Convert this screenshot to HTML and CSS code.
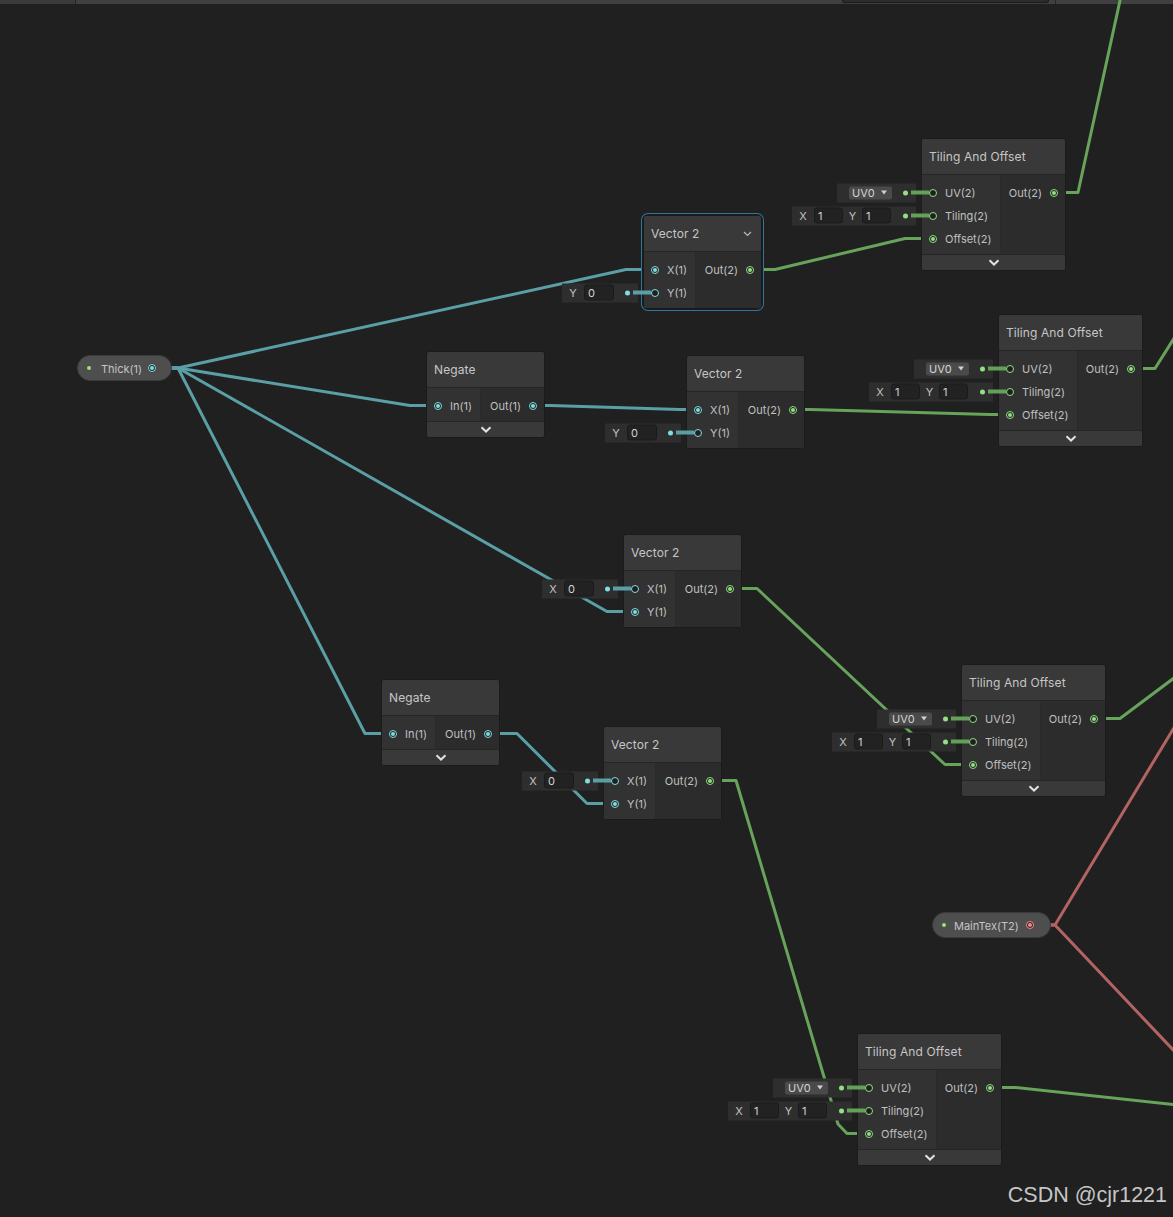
FILE: index.html
```html
<!DOCTYPE html>
<html>
<head>
<meta charset="utf-8">
<link rel="stylesheet" href="styles.css">
</head>
<body>
<div class="canvas">
  <div class="topbar"><div class="tb-a"></div><div class="tb-b"></div><div class="tb-c"></div><div class="tb-d"></div><div class="tb-e"></div></div>

  <svg class="wires" width="1173" height="1217" viewBox="0 0 1173 1217">
    <g fill="none" stroke-width="3" stroke-linejoin="round" stroke-linecap="round">
      <g stroke="#5a9fa6">
        <path d="M153,368 H178 L626,269.5 H655"/>
        <path d="M153,368 H178 L410,405.5 H438"/>
        <path d="M153,368 H178 L607,611.5 H635"/>
        <path d="M153,368 H178 L365,733.5 H393"/>
        <path d="M533,405.5 H550 L680,409.5 H698"/>
        <path d="M488,733.5 H517 L587,803.5 H615"/>
      </g>
      <g stroke="#67a35b">
        <path d="M750,269.5 H775 L905,238.5 H933"/>
        <path d="M1054,192.5 H1078 L1121,-4"/>
        <path d="M792,409.5 H810 L990,414.5 H1010"/>
        <path d="M1131,368.5 H1155 L1178,332"/>
        <path d="M730,588.5 H757 L945,764.5 H973"/>
        <path d="M1094,718.5 H1120 L1178,675"/>
        <path d="M710,780.5 H736 L838,1124 L847,1133.5 H869"/>
        <path d="M990,1087.5 H1015 L1178,1105"/>
      </g>
      <g stroke="#b36462">
        <path d="M1031,925 H1055 L1178,721"/>
        <path d="M1031,925 H1055 L1178,1055"/>
      </g>
    </g>
  </svg>

  <!-- Tiling And Offset 1 -->
  <div class="node tao" style="left:921px;top:138px">
    <div class="hdr">Tiling And Offset</div>
    <div class="body">
      <div class="ins">
        <div class="row"><div class="field uv"><span class="drop">UV0<i class="tri"></i></span><span class="fdot g"></span></div><span class="pc g e"></span><span class="lbl">UV(2)</span></div>
        <div class="row"><div class="field xy"><span class="fl">X</span><span class="num">1</span><span class="fl y">Y</span><span class="num">1</span><span class="fdot g"></span></div><span class="pc g e"></span><span class="lbl">Tiling(2)</span></div>
        <div class="row"><span class="pc g f"></span><span class="lbl">Offset(2)</span></div>
      </div>
      <div class="outs"><div class="row"><span class="lbl">Out(2)</span><span class="pc g f"></span></div></div>
    </div>
    <div class="foot"><svg width="12" height="7" viewBox="0 0 12 7"><polyline points="1.5,1.2 6,5.5 10.5,1.2" fill="none" stroke="#e2e2e2" stroke-width="2"/></svg></div>
  </div>

  <!-- Tiling And Offset 2 -->
  <div class="node tao" style="left:998px;top:314px">
    <div class="hdr">Tiling And Offset</div>
    <div class="body">
      <div class="ins">
        <div class="row"><div class="field uv"><span class="drop">UV0<i class="tri"></i></span><span class="fdot g"></span></div><span class="pc g e"></span><span class="lbl">UV(2)</span></div>
        <div class="row"><div class="field xy"><span class="fl">X</span><span class="num">1</span><span class="fl y">Y</span><span class="num">1</span><span class="fdot g"></span></div><span class="pc g e"></span><span class="lbl">Tiling(2)</span></div>
        <div class="row"><span class="pc g f"></span><span class="lbl">Offset(2)</span></div>
      </div>
      <div class="outs"><div class="row"><span class="lbl">Out(2)</span><span class="pc g f"></span></div></div>
    </div>
    <div class="foot"><svg width="12" height="7" viewBox="0 0 12 7"><polyline points="1.5,1.2 6,5.5 10.5,1.2" fill="none" stroke="#e2e2e2" stroke-width="2"/></svg></div>
  </div>

  <!-- Tiling And Offset 3 -->
  <div class="node tao" style="left:961px;top:664px">
    <div class="hdr">Tiling And Offset</div>
    <div class="body">
      <div class="ins">
        <div class="row"><div class="field uv"><span class="drop">UV0<i class="tri"></i></span><span class="fdot g"></span></div><span class="pc g e"></span><span class="lbl">UV(2)</span></div>
        <div class="row"><div class="field xy"><span class="fl">X</span><span class="num">1</span><span class="fl y">Y</span><span class="num">1</span><span class="fdot g"></span></div><span class="pc g e"></span><span class="lbl">Tiling(2)</span></div>
        <div class="row"><span class="pc g f"></span><span class="lbl">Offset(2)</span></div>
      </div>
      <div class="outs"><div class="row"><span class="lbl">Out(2)</span><span class="pc g f"></span></div></div>
    </div>
    <div class="foot"><svg width="12" height="7" viewBox="0 0 12 7"><polyline points="1.5,1.2 6,5.5 10.5,1.2" fill="none" stroke="#e2e2e2" stroke-width="2"/></svg></div>
  </div>

  <!-- Tiling And Offset 4 -->
  <div class="node tao" style="left:857px;top:1033px">
    <div class="hdr">Tiling And Offset</div>
    <div class="body">
      <div class="ins">
        <div class="row"><div class="field uv"><span class="drop">UV0<i class="tri"></i></span><span class="fdot g"></span></div><span class="pc g e"></span><span class="lbl">UV(2)</span></div>
        <div class="row"><div class="field xy"><span class="fl">X</span><span class="num">1</span><span class="fl y">Y</span><span class="num">1</span><span class="fdot g"></span></div><span class="pc g e"></span><span class="lbl">Tiling(2)</span></div>
        <div class="row"><span class="pc g f"></span><span class="lbl">Offset(2)</span></div>
      </div>
      <div class="outs"><div class="row"><span class="lbl">Out(2)</span><span class="pc g f"></span></div></div>
    </div>
    <div class="foot"><svg width="12" height="7" viewBox="0 0 12 7"><polyline points="1.5,1.2 6,5.5 10.5,1.2" fill="none" stroke="#e2e2e2" stroke-width="2"/></svg></div>
  </div>

  <!-- Vector 2 selected -->
  <div class="node v2 sel" style="left:643px;top:215px">
    <div class="hdr">Vector 2<svg class="hchev" width="9" height="6" viewBox="0 0 9 6"><polyline points="1,1 4.5,4.5 8,1" fill="none" stroke="#b8b8b8" stroke-width="1.2"/></svg></div>
    <div class="body">
      <div class="ins">
        <div class="row"><span class="pc c f"></span><span class="lbl">X(1)</span></div>
        <div class="row"><div class="field one"><span class="fl">Y</span><span class="num">0</span><span class="fdot c"></span></div><span class="pc c e"></span><span class="lbl">Y(1)</span></div>
      </div>
      <div class="outs"><div class="row"><span class="lbl">Out(2)</span><span class="pc g f"></span></div></div>
    </div>
  </div>

  <!-- Vector 2 #2 -->
  <div class="node v2" style="left:686px;top:355px">
    <div class="hdr">Vector 2</div>
    <div class="body">
      <div class="ins">
        <div class="row"><span class="pc c f"></span><span class="lbl">X(1)</span></div>
        <div class="row"><div class="field one"><span class="fl">Y</span><span class="num">0</span><span class="fdot c"></span></div><span class="pc c e"></span><span class="lbl">Y(1)</span></div>
      </div>
      <div class="outs"><div class="row"><span class="lbl">Out(2)</span><span class="pc g f"></span></div></div>
    </div>
  </div>

  <!-- Vector 2 #3 -->
  <div class="node v2" style="left:623px;top:534px">
    <div class="hdr">Vector 2</div>
    <div class="body">
      <div class="ins">
        <div class="row"><div class="field one"><span class="fl">X</span><span class="num">0</span><span class="fdot c"></span></div><span class="pc c e"></span><span class="lbl">X(1)</span></div>
        <div class="row"><span class="pc c f"></span><span class="lbl">Y(1)</span></div>
      </div>
      <div class="outs"><div class="row"><span class="lbl">Out(2)</span><span class="pc g f"></span></div></div>
    </div>
  </div>

  <!-- Vector 2 #4 -->
  <div class="node v2" style="left:603px;top:726px">
    <div class="hdr">Vector 2</div>
    <div class="body">
      <div class="ins">
        <div class="row"><div class="field one"><span class="fl">X</span><span class="num">0</span><span class="fdot c"></span></div><span class="pc c e"></span><span class="lbl">X(1)</span></div>
        <div class="row"><span class="pc c f"></span><span class="lbl">Y(1)</span></div>
      </div>
      <div class="outs"><div class="row"><span class="lbl">Out(2)</span><span class="pc g f"></span></div></div>
    </div>
  </div>

  <!-- Negate 1 -->
  <div class="node neg" style="left:426px;top:351px">
    <div class="hdr">Negate</div>
    <div class="body">
      <div class="ins"><div class="row"><span class="pc c f"></span><span class="lbl">In(1)</span></div></div>
      <div class="outs"><div class="row"><span class="lbl">Out(1)</span><span class="pc c f"></span></div></div>
    </div>
    <div class="foot"><svg width="12" height="7" viewBox="0 0 12 7"><polyline points="1.5,1.2 6,5.5 10.5,1.2" fill="none" stroke="#e2e2e2" stroke-width="2"/></svg></div>
  </div>

  <!-- Negate 2 -->
  <div class="node neg" style="left:381px;top:679px">
    <div class="hdr">Negate</div>
    <div class="body">
      <div class="ins"><div class="row"><span class="pc c f"></span><span class="lbl">In(1)</span></div></div>
      <div class="outs"><div class="row"><span class="lbl">Out(1)</span><span class="pc c f"></span></div></div>
    </div>
    <div class="foot"><svg width="12" height="7" viewBox="0 0 12 7"><polyline points="1.5,1.2 6,5.5 10.5,1.2" fill="none" stroke="#e2e2e2" stroke-width="2"/></svg></div>
  </div>

  <!-- Property pills -->
  <div class="pill thick" style="left:77px;top:355px"><span class="pdot"></span><span class="ptxt">Thick(1)</span><span class="pc c f"></span></div>
  <div class="pill tex" style="left:932px;top:912px"><span class="pdot"></span><span class="ptxt">MainTex(T2)</span><span class="pc r f"></span></div>

  <div class="watermark">CSDN @cjr1221</div>
</div>
</body>
</html>
```

FILE: styles.css
```css
* { box-sizing: border-box; margin: 0; padding: 0; }
html, body { background: #202020; }
body {
  width: 1173px;
  height: 1217px;
  overflow: hidden;
  font-family: Inter, "Noto Sans", "DejaVu Sans", sans-serif;
  color: #c2c2c2;
}
.canvas { position: relative; width: 1173px; height: 1217px; overflow: hidden; background: #202020; }

.topbar { display: flex; height: 4px; background: #3d3d3d; }
.tb-a { width: 76px; background: #3a3a3a; border-right: 1px solid #262626; }
.tb-b { flex: 1; background: #404040; }
.tb-c { width: 207px; height: 3px; background: #2c2c2c; border: 1px solid #1a1a1a; border-top: 0; border-radius: 0 0 3px 3px; }
.tb-d { width: 6px; background: #404040; }
.tb-e { width: 118px; background: #404040; border-left: 1px solid #262626; }

.wires { position: absolute; left: 0; top: 0; }

/* nodes */
.node {
  position: absolute;
  background: #2f2f2f;
  border: 1px solid #1b1b1b;
  border-radius: 3px;
  font-size: 11px;
}
.node.tao { width: 145px; }
.node.v2 { width: 119px; }
.node.neg { width: 119px; }
.node.sel {
  border-radius: 5px;
  box-shadow: 0 0 0 1px #1b1b1b, 0 0 0 2px #2e76a0;
}

.hdr {
  height: 36px;
  display: flex;
  align-items: center;
  justify-content: space-between;
  padding: 0 9px 0 7px;
  background: #393939;
  border-bottom: 1px solid #252525;
  border-radius: 2px 2px 0 0;
  font-size: 12px;
  color: #c6c6c6;
  letter-spacing: 0.1px;
}
.hchev { margin-top: 1px; }

.body { display: flex; }
.ins {
  background: #323232;
  padding: 6px 0 4px;
  border-right: 1px solid #2a2a2a;
}
.tao .ins { width: 79px; }
.v2 .ins { width: 52px; }
.neg .ins { width: 54px; }
.outs { flex: 1; background: #2c2c2c; padding: 6px 0 4px; }

.row { position: relative; height: 23px; display: flex; align-items: center; }
.ins .row { padding-left: 7px; }
.outs .row { justify-content: flex-end; padding-right: 7px; }
.ins .lbl { margin-left: 8px; }
.outs .lbl { margin-right: 8px; }
.lbl { color: #c0c0c0; white-space: nowrap; }

.foot {
  height: 16px;
  background: #393939;
  border-top: 1px solid #262626;
  border-radius: 0 0 2px 2px;
  display: flex;
  align-items: center;
  justify-content: center;
}

/* ports */
.pc {
  position: relative;
  flex: none;
  width: 8px;
  height: 8px;
  border-radius: 50%;
  border: 1.5px solid currentColor;
  background: #1f1f1f;
}
.pc.f::after {
  content: "";
  position: absolute;
  left: 1px; top: 1px; right: 1px; bottom: 1px;
  border-radius: 50%;
  background: currentColor;
}
.pc.c { color: #82dde2; }
.pc.g { color: #92e184; }
.pc.r { color: #f48a8a; }

/* inline value fields */
.field {
  position: absolute;
  right: calc(100% + 6px);
  top: 50%;
  transform: translateY(-50%);
  height: 19px;
  display: flex;
  align-items: center;
  background: #2e2e2e;
  padding-right: 8px;
  font-size: 11px;
  color: #c8c8c8;
}
.field.uv { width: 79px; padding-left: 12px; }
.field.xy { width: 124px; }
.field.one { width: 76px; }
.fl { width: 22px; text-align: center; color: #c2c2c2; }
.fl.y { width: 19px; }
.num {
  width: 29px;
  height: 16px;
  line-height: 14px;
  background: #222222;
  border: 1px solid #1a1a1a;
  border-radius: 3px;
  padding-left: 3px;
  color: #d2d2d2;
}
.field.one .num { width: 30px; }
.drop {
  display: flex;
  align-items: center;
  width: 43px;
  height: 13px;
  background: #4a4a4a;
  border-radius: 2px;
  padding-left: 3px;
  font-size: 11px;
  color: #d4d4d4;
}
.tri {
  display: block;
  width: 0; height: 0;
  margin-left: 6px;
  border-left: 3.5px solid transparent;
  border-right: 3.5px solid transparent;
  border-top: 4px solid #d0d0d0;
}
.fdot {
  position: relative;
  margin-left: auto;
  width: 5px;
  height: 5px;
  border-radius: 50%;
  flex: none;
}
.fdot::after {
  content: "";
  position: absolute;
  left: 7.5px;
  top: 0.5px;
  width: 18px;
  height: 4px;
}
.fdot.g { background: #92e184; }
.fdot.g::after { background: #63a058; }
.fdot.c { background: #82dde2; }
.fdot.c::after { background: #5a9fa6; }

/* property pills */
.pill {
  position: absolute;
  height: 26px;
  display: flex;
  align-items: center;
  padding-left: 9px;
  background: #4e4e4e;
  border: 1px solid #3a3a3a;
  border-radius: 13px;
  font-size: 11px;
  color: #c4c4c4;
}
.pill.thick { width: 95px; padding-right: 15px; }
.pill.tex { width: 119px; padding-right: 16px; }
.pdot { width: 4px; height: 4px; border-radius: 50%; background: #9de06a; flex: none; }
.thick .ptxt { margin-left: 10px; }
.tex .ptxt { margin-left: 8px; }
.ptxt { padding-top: 1px; }
.pill .pc { margin-left: auto; background: #1f1f1f; }

.watermark {
  position: absolute;
  right: 6px;
  top: 1183px;
  font-family: "Liberation Sans", Arial, sans-serif;
  font-size: 21.5px;
  color: #c6c6c6;
  white-space: nowrap;
}
```
